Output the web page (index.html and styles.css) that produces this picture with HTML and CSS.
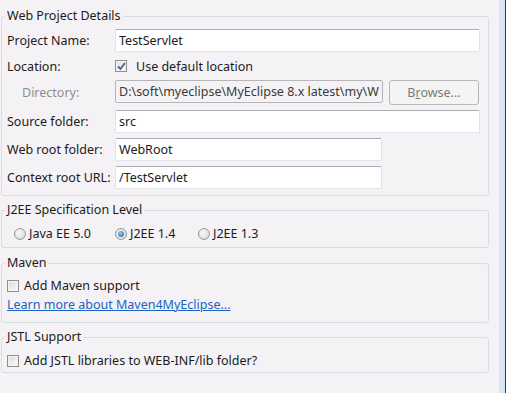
FILE: index.html
```html
<!DOCTYPE html>
<html lang="en">
<head>
    <meta charset="UTF-8">
    <title>New Web Project</title>
    <link rel="stylesheet" href="styles.css">
</head>
<body>
    <div class="window">
        <main class="page">
            <fieldset class="group details">
                <legend>Web Project Details</legend>
                <div class="form">
                    <label class="label">Project Name:</label>
                    <input class="field wide" type="text" value="TestServlet">

                    <span class="label">Location:</span>
                    <div class="check-row location">
                        <span class="check checked">
                            <svg width="9" height="9" viewBox="0 0 9 9"><path d="M1 4.5 L3.5 7 L8 1" fill="none" stroke="#4a5e9c" stroke-width="1.8"/></svg>
                        </span>
                        <span>Use default location</span>
                    </div>

                    <label class="label muted">Directory:</label>
                    <div class="dir-row">
                        <input class="field dir" type="text" value="D:\soft\myeclipse\MyEclipse 8.x latest\my\WebProjects\TestServlet" disabled>
                        <button class="button" disabled>B<u>r</u>owse...</button>
                    </div>

                    <label class="label">Source folder:</label>
                    <input class="field wide" type="text" value="src">

                    <label class="label">Web root folder:</label>
                    <input class="field short" type="text" value="WebRoot">

                    <label class="label">Context root URL:</label>
                    <input class="field short" type="text" value="/TestServlet">
                </div>
            </fieldset>

            <fieldset class="group level">
                <legend>J2EE Specification Level</legend>
                <div class="radios">
                    <span class="option"><span class="radio"></span>Java EE 5.0</span>
                    <span class="option"><span class="radio on"></span>J2EE 1.4</span>
                    <span class="option"><span class="radio"></span>J2EE 1.3</span>
                </div>
            </fieldset>

            <fieldset class="group maven">
                <legend>Maven</legend>
                <div class="check-row">
                    <span class="check"></span>
                    <span>Add Maven support</span>
                </div>
                <a class="link" href="#">Learn more about Maven4MyEclipse...</a>
            </fieldset>

            <fieldset class="group jstl">
                <legend>JSTL Support</legend>
                <div class="check-row">
                    <span class="check"></span>
                    <span>Add JSTL libraries to WEB-INF/lib folder?</span>
                </div>
            </fieldset>
        </main>
        <div class="edge"></div>
    </div>
</body>
</html>
```

FILE: styles.css
```css
* {
    margin: 0;
    padding: 0;
    box-sizing: border-box;
}

body {
    font-family: 'Noto Sans', 'Open Sans', sans-serif;
    font-size: 12.5px;
    color: #1b1b1b;
    background: #f5f2f5;
    height: 393px;
    overflow: hidden;
}

.window {
    display: flex;
    height: 393px;
}

.page {
    flex: 1;
    padding: 0 10px 0 1px;
}

.edge {
    width: 9px;
    background: linear-gradient(90deg, #d8e5f4 0, #d8e5f4 6px, #3a3a3a 6px);
}

/* group boxes */
.group {
    border: 1px solid #d6dde3;
    border-radius: 3px;
    padding: 3px 8px 0 5px;
    margin-top: 6px;
}

.group.details {
    margin-top: 8px;
    padding-bottom: 6px;
}

.group.maven {
    margin-top: 7px;
    padding-bottom: 9px;
}

.group.jstl {
    padding-bottom: 2px;
}

.group legend {
    margin-left: -2px;
    padding: 0 2px;
    line-height: 16px;
}

.form {
    display: grid;
    grid-template-columns: 108px 1fr;
    row-gap: 5px;
    align-items: center;
    padding-top: 2px;
}

.label.muted {
    color: #8e8e8e;
    padding-left: 15px;
}

.field {
    height: 23px;
    border: 1px solid #e2e3ea;
    border-top-color: #abadb3;
    border-radius: 2px;
    background: #fff;
    padding: 0 3px;
    font: inherit;
    color: #1b1b1b;
}

.field.wide {
    width: 365px;
}

.field.short {
    width: 267px;
}

.dir-row {
    display: flex;
    gap: 6px;
}

.field.dir {
    width: 268px;
    background: #f5f2f5;
    border-color: #b5b5b8;
    color: #3a3a3a;
}

.button {
    width: 90px;
    height: 25px;
    border: 1px solid #b7b7b7;
    border-radius: 3px;
    background: #f4f4f4;
    font: inherit;
    color: #7a7a7a;
}

.check-row {
    display: flex;
    align-items: center;
    gap: 5px;
    height: 19px;
    margin-top: 2px;
}

.check-row.location {
    gap: 9px;
    height: 18px;
    margin-top: 0;
}

.jstl .check-row {
    margin-top: 3px;
}

.check {
    width: 12px;
    height: 12px;
    border: 1px solid #8f8f8f;
    background: linear-gradient(135deg, #dcdcdc, #fbfbfb);
    box-shadow: inset 0 0 0 1px #f4f4f4;
    display: flex;
    align-items: center;
    justify-content: center;
}

.link {
    display: inline-block;
    color: #1a62c4;
    line-height: 17px;
    margin-top: 1px;
}

.radios {
    display: grid;
    grid-template-columns: 101px 83px auto;
    height: 16px;
    align-items: center;
    margin: 4px 0 6px 7px;
}

.option {
    display: flex;
    align-items: center;
    gap: 3px;
}

.radio {
    width: 12px;
    height: 12px;
    border-radius: 50%;
    border: 1px solid #9a9a9a;
    background: radial-gradient(circle at 40% 40%, #fafafa, #d2d2d2);
    display: flex;
    align-items: center;
    justify-content: center;
}

.radio.on::after {
    content: "";
    width: 6px;
    height: 6px;
    border-radius: 50%;
    background: radial-gradient(circle at 40% 35%, #8fd0f5, #1d5d98);
}
```
